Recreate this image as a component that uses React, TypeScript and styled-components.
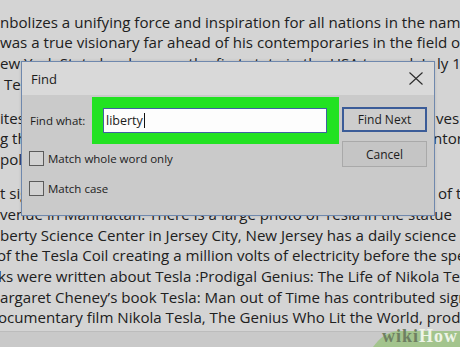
import React from "react";
import styled, { createGlobalStyle } from "styled-components";

const Global = createGlobalStyle`
  html, body { margin: 0; padding: 0; }
  body { width: 460px; height: 347px; overflow: hidden; background: #d4d4d4; }
`;

const Page = styled.div`
  position: relative;
  width: 460px;
  height: 347px;
  overflow: hidden;
  background: #d4d4d4;
  display: flex;
  flex-direction: column;
`;

const Document = styled.div`
  flex: 1;
  padding-top: 11.5px;
  font-family: "Open Sans", "Noto Sans", sans-serif;
  font-size: 15.1px;
  line-height: 20.7px;
  color: #202020;
  overflow: hidden;
`;

const Paragraph = styled.p`
  margin: 0 0 13.4px 0;
`;

const Line = styled.div<{ $shift?: number }>`
  display: flex;
  white-space: nowrap;
  margin-left: ${(p) => p.$shift ?? 0}px;
`;

const Lead = styled.span`
  flex: 1;
  min-width: 0;
  overflow: hidden;
`;

const Tail = styled.span<{ $width: number }>`
  flex: none;
  width: ${(p) => p.$width}px;
`;

const StatusBand = styled.div`
  flex: none;
  height: 15px;
  background: #c9c9c9;
  border-top: 1px solid #bcbcbc;
`;

const Dialog = styled.div`
  position: absolute;
  left: 21px;
  top: 61px;
  width: 414px;
  height: 155px;
  box-sizing: border-box;
  border: 1px solid #6f88ad;
  display: flex;
  flex-direction: column;
  font-family: "Open Sans", "Noto Sans", sans-serif;
  color: #1c1c1c;
  box-shadow: 0 0 3px rgba(0, 0, 0, 0.12);
`;

const TitleBar = styled.div`
  flex: none;
  height: 33px;
  background: #d9d9d9;
  display: flex;
  align-items: center;
  justify-content: space-between;
  padding: 0 11px 0 9px;
`;

const Title = styled.span`
  font-size: 13px;
`;

const CloseIcon = styled.svg`
  width: 14px;
  height: 13px;
  display: block;
`;

const Body = styled.div`
  flex: 1;
  background: #cacaca;
  display: flex;
  padding: 2px 7px 0 7px;
  font-size: 11.5px;
`;

const LeftColumn = styled.div`
  flex: 1;
  display: flex;
  flex-direction: column;
`;

const FindRow = styled.div`
  display: flex;
  align-items: center;
`;

const Label = styled.span`
  width: 63px;
  padding-left: 1px;
  box-sizing: border-box;
`;

const Highlight = styled.div`
  background: #22e222;
  padding: 11px 12px 11px 11px;
`;

const Input = styled.div`
  width: 224px;
  height: 25px;
  box-sizing: border-box;
  background: #fdfdfd;
  border: 1px solid #3f62a0;
  display: flex;
  align-items: center;
  padding-left: 2px;
  font-size: 12.5px;
`;

const Caret = styled.span`
  display: inline-block;
  width: 1px;
  height: 15px;
  background: #111;
  margin-left: 1px;
`;

const CheckRow = styled.label<{ $gap: number }>`
  display: flex;
  align-items: center;
  gap: 4px;
  margin-top: ${(p) => p.$gap}px;
  height: 15px;
`;

const Box = styled.span`
  width: 15px;
  height: 15px;
  box-sizing: border-box;
  border: 1px solid #5b5b5b;
  background: #d2d2d2;
  flex: none;
`;

const ButtonColumn = styled.div`
  flex: none;
  width: 85px;
  margin-left: 2px;
  padding-top: 10px;
  display: flex;
  flex-direction: column;
  gap: 9px;
`;

const Button = styled.div<{ $default?: boolean }>`
  height: ${(p) => (p.$default ? 25 : 26)}px;
  box-sizing: border-box;
  display: flex;
  align-items: center;
  justify-content: center;
  font-size: 12px;
  background: ${(p) => (p.$default ? "#cdcdcd" : "#c5c5c5")};
  border: ${(p) => (p.$default ? "2px solid #3b5c98" : "1px solid #a9a9a9")};
`;

const Logo = styled.div`
  position: absolute;
  right: 0;
  bottom: 0;
  width: 90px;
  height: 19px;
  display: flex;
  align-items: flex-start;
  justify-content: flex-end;
  padding: 1px 2px 0 0;
  box-sizing: border-box;
  font-family: "Liberation Serif", "DejaVu Serif", serif;
  font-weight: bold;
  font-size: 18px;
  line-height: 14px;
  letter-spacing: 1px;
`;

const LogoShape = styled.svg`
  position: absolute;
  left: 0;
  top: 0;
  width: 90px;
  height: 19px;
`;

const LogoWiki = styled.span`
  position: relative;
  color: #6e7f62;
`;

const LogoHow = styled.span`
  position: relative;
  color: #eef4e8;
`;

export default function App() {
  return (
    <>
      <Global />
      <Page>
        <Document>
          <Paragraph>
            <Line>nbolizes a unifying force and inspiration for all nations in the name of</Line>
            <Line>was a true visionary far ahead of his contemporaries in the field of</Line>
            <Line>
              <Lead>ew York State has become the first state in the USA to mark Ju</Lead>
              <Tail $width={23}>ly 10 as</Tail>
            </Line>
            <Line $shift={4}>Tesla Day.</Line>
          </Paragraph>
          <Paragraph>
            <Line>
              <Lead>ites of Tesla's laboratories are being preserved and his archi</Lead>
              <Tail $width={24}>ves can</Tail>
            </Line>
            <Line>
              <Lead>g the life of this great Serbian-American engineer and inve</Lead>
              <Tail $width={27}>ntor</Tail>
            </Line>
            <Line>pol of progress.</Line>
          </Paragraph>
          <Paragraph>
            <Line>
              <Lead>t signs of his legacy remain all over the world, a lot </Lead>
              <Tail $width={22}>of them</Tail>
            </Line>
            <Line>venue in Manhattan. There is a large photo of Tesla in the statue</Line>
            <Line>berty Science Center in Jersey City, New Jersey has a daily science</Line>
            <Line $shift={-3}>of the Tesla Coil creating a million volts of electricity before the spectators</Line>
            <Line $shift={-2}>ks were written about Tesla :Prodigal Genius: The Life of Nikola Tesla</Line>
            <Line>argaret Cheney’s book Tesla: Man out of Time has contributed significantly</Line>
            <Line $shift={-2}>ocumentary film Nikola Tesla, The Genius Who Lit the World, produced</Line>
          </Paragraph>
        </Document>
        <StatusBand />

        <Dialog>
          <TitleBar>
            <Title>Find</Title>
            <CloseIcon viewBox="0 0 14 13">
              <path d="M0.5 0.5 L13.5 12.5 M13.5 0.5 L0.5 12.5" stroke="#2a2a2a" strokeWidth="1.1" fill="none" />
            </CloseIcon>
          </TitleBar>
          <Body>
            <LeftColumn>
              <FindRow>
                <Label>Find what:</Label>
                <Highlight>
                  <Input>
                    liberty
                    <Caret />
                  </Input>
                </Highlight>
              </FindRow>
              <CheckRow $gap={7}>
                <Box />
                Match whole word only
              </CheckRow>
              <CheckRow $gap={15}>
                <Box />
                Match case
              </CheckRow>
            </LeftColumn>
            <ButtonColumn>
              <Button $default>Find Next</Button>
              <Button>Cancel</Button>
            </ButtonColumn>
          </Body>
        </Dialog>

        <Logo>
          <LogoShape viewBox="0 0 90 19" preserveAspectRatio="none">
            <path d="M3 19 C10 10 16 4 28 3 L90 3 L90 19 Z" fill="#a3c48d" />
          </LogoShape>
          <LogoWiki>wiki</LogoWiki>
          <LogoHow>How</LogoHow>
        </Logo>
      </Page>
    </>
  );
}
